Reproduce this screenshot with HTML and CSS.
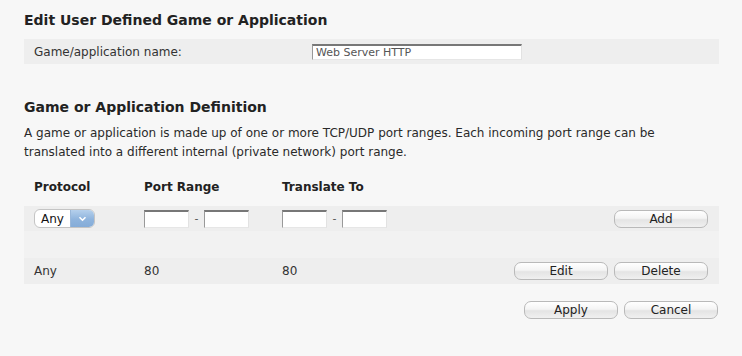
FILE: index.html
```html
<!DOCTYPE html>
<html lang="en">
<head>
<meta charset="utf-8">
<title>Edit User Defined Game or Application</title>
<link rel="stylesheet" href="styles.css">
</head>
<body>
<div class="page">
  <h1 class="title">Edit User Defined Game or Application</h1>
  <div class="name-row">
    <span class="name-label">Game/application name:</span>
    <input class="field name-field" type="text" value="Web Server HTTP">
  </div>

  <h2 class="title sub">Game or Application Definition</h2>
  <p class="desc">A game or application is made up of one or more TCP/UDP port ranges. Each incoming port range can be<br>translated into a different internal (private network) port range.</p>

  <div class="grid head">
    <span>Protocol</span>
    <span>Port Range</span>
    <span>Translate To</span>
    <span></span>
  </div>

  <div class="grid row band">
    <span class="select">
      <span class="sel-value">Any</span>
      <span class="sel-arrow"><svg width="9" height="6" viewBox="0 0 9 6"><path d="M1.5 1.2 L4.5 4.2 L7.5 1.2" fill="none" stroke="#fff" stroke-width="1.6"/></svg></span>
    </span>
    <span class="range"><input class="field port" type="text"><span class="dash">-</span><input class="field port" type="text"></span>
    <span class="range"><input class="field port" type="text"><span class="dash">-</span><input class="field port" type="text"></span>
    <span class="btns"><button class="btn">Add</button></span>
  </div>

  <div class="spacer-band"></div>

  <div class="grid row band data">
    <span>Any</span>
    <span>80</span>
    <span>80</span>
    <span class="btns"><button class="btn">Edit</button><button class="btn">Delete</button></span>
  </div>

  <div class="actions">
    <button class="btn">Apply</button>
    <button class="btn">Cancel</button>
  </div>
</div>
</body>
</html>
```

FILE: styles.css
```css
html, body {
  margin: 0;
  padding: 0;
  background: #f7f7f7;
}
body {
  font-family: "DejaVu Sans", Verdana, sans-serif;
  font-size: 12px;
  color: #333;
}
.page {
  width: 695px;
  margin-left: 24px;
  padding-top: 10px;
}
.title {
  margin: 0;
  font-size: 14px;
  line-height: 20px;
  font-weight: bold;
  color: #222;
}
.sub {
  margin-top: 33px;
}
.name-row {
  margin-top: 9px;
  height: 25px;
  background: #eeeeee;
  display: flex;
  align-items: center;
  padding-left: 10px;
}
.name-label {
  width: 278px;
}
.field {
  box-sizing: border-box;
  margin: 0;
  padding: 0 3px;
  height: 17px;
  background: #fff;
  border-style: solid;
  border-width: 2px 1px 1px 1px;
  border-color: #777 #e2e2e2 #e6e6e6 #999;
  font-family: "DejaVu Sans", Verdana, sans-serif;
  font-size: 11px;
  color: #555;
  outline: none;
}
.name-field {
  width: 210px;
  height: 16px;
}
.desc {
  margin: 7px 0 0;
  line-height: 19px;
  color: #2a2a2a;
}
.grid {
  display: grid;
  grid-template-columns: 110px 138px 1fr auto;
  align-items: center;
  padding: 0 11px 0 10px;
}
.head {
  margin-top: 16px;
  height: 18px;
  font-weight: bold;
  color: #222;
}
.row {
  height: 25px;
}
.head + .row {
  margin-top: 10px;
}
.band {
  background: #eeeeee;
}
.data {
  height: 26px;
  color: #333;
}
.spacer-band {
  height: 27px;
  background: #f2f2f2;
}
.select {
  display: inline-flex;
  width: 61px;
  height: 19px;
  box-sizing: border-box;
  border: 1px solid #c4c4c4;
  border-radius: 6px;
  overflow: hidden;
  background: #fff;
}
.sel-value {
  flex: 1;
  display: flex;
  align-items: center;
  justify-content: center;
  color: #111;
  font-size: 12px;
}
.sel-arrow {
  width: 23px;
  display: flex;
  align-items: center;
  justify-content: center;
  background: linear-gradient(#b5d0ec, #8fb4dd 55%, #85acd8);
  border-left: 1px solid #9ab8da;
}
.range {
  display: flex;
  align-items: center;
}
.port {
  width: 45px;
  height: 18px;
}
.dash {
  width: 15px;
  text-align: center;
  color: #555;
  font-size: 11px;
}
.btns {
  display: flex;
  gap: 6px;
}
.btn {
  box-sizing: border-box;
  width: 94px;
  height: 18px;
  margin: 0;
  padding: 0;
  border: 1px solid #b9b9b9;
  border-radius: 7px;
  background: linear-gradient(#ffffff, #f4f4f4 45%, #e4e4e4 55%, #f0f0f0);
  font-family: "DejaVu Sans", Verdana, sans-serif;
  font-size: 12px;
  color: #222;
  line-height: 16px;
}
.actions {
  margin-top: 17px;
  display: flex;
  justify-content: flex-end;
  gap: 6px;
  padding-right: 1px;
}
```
